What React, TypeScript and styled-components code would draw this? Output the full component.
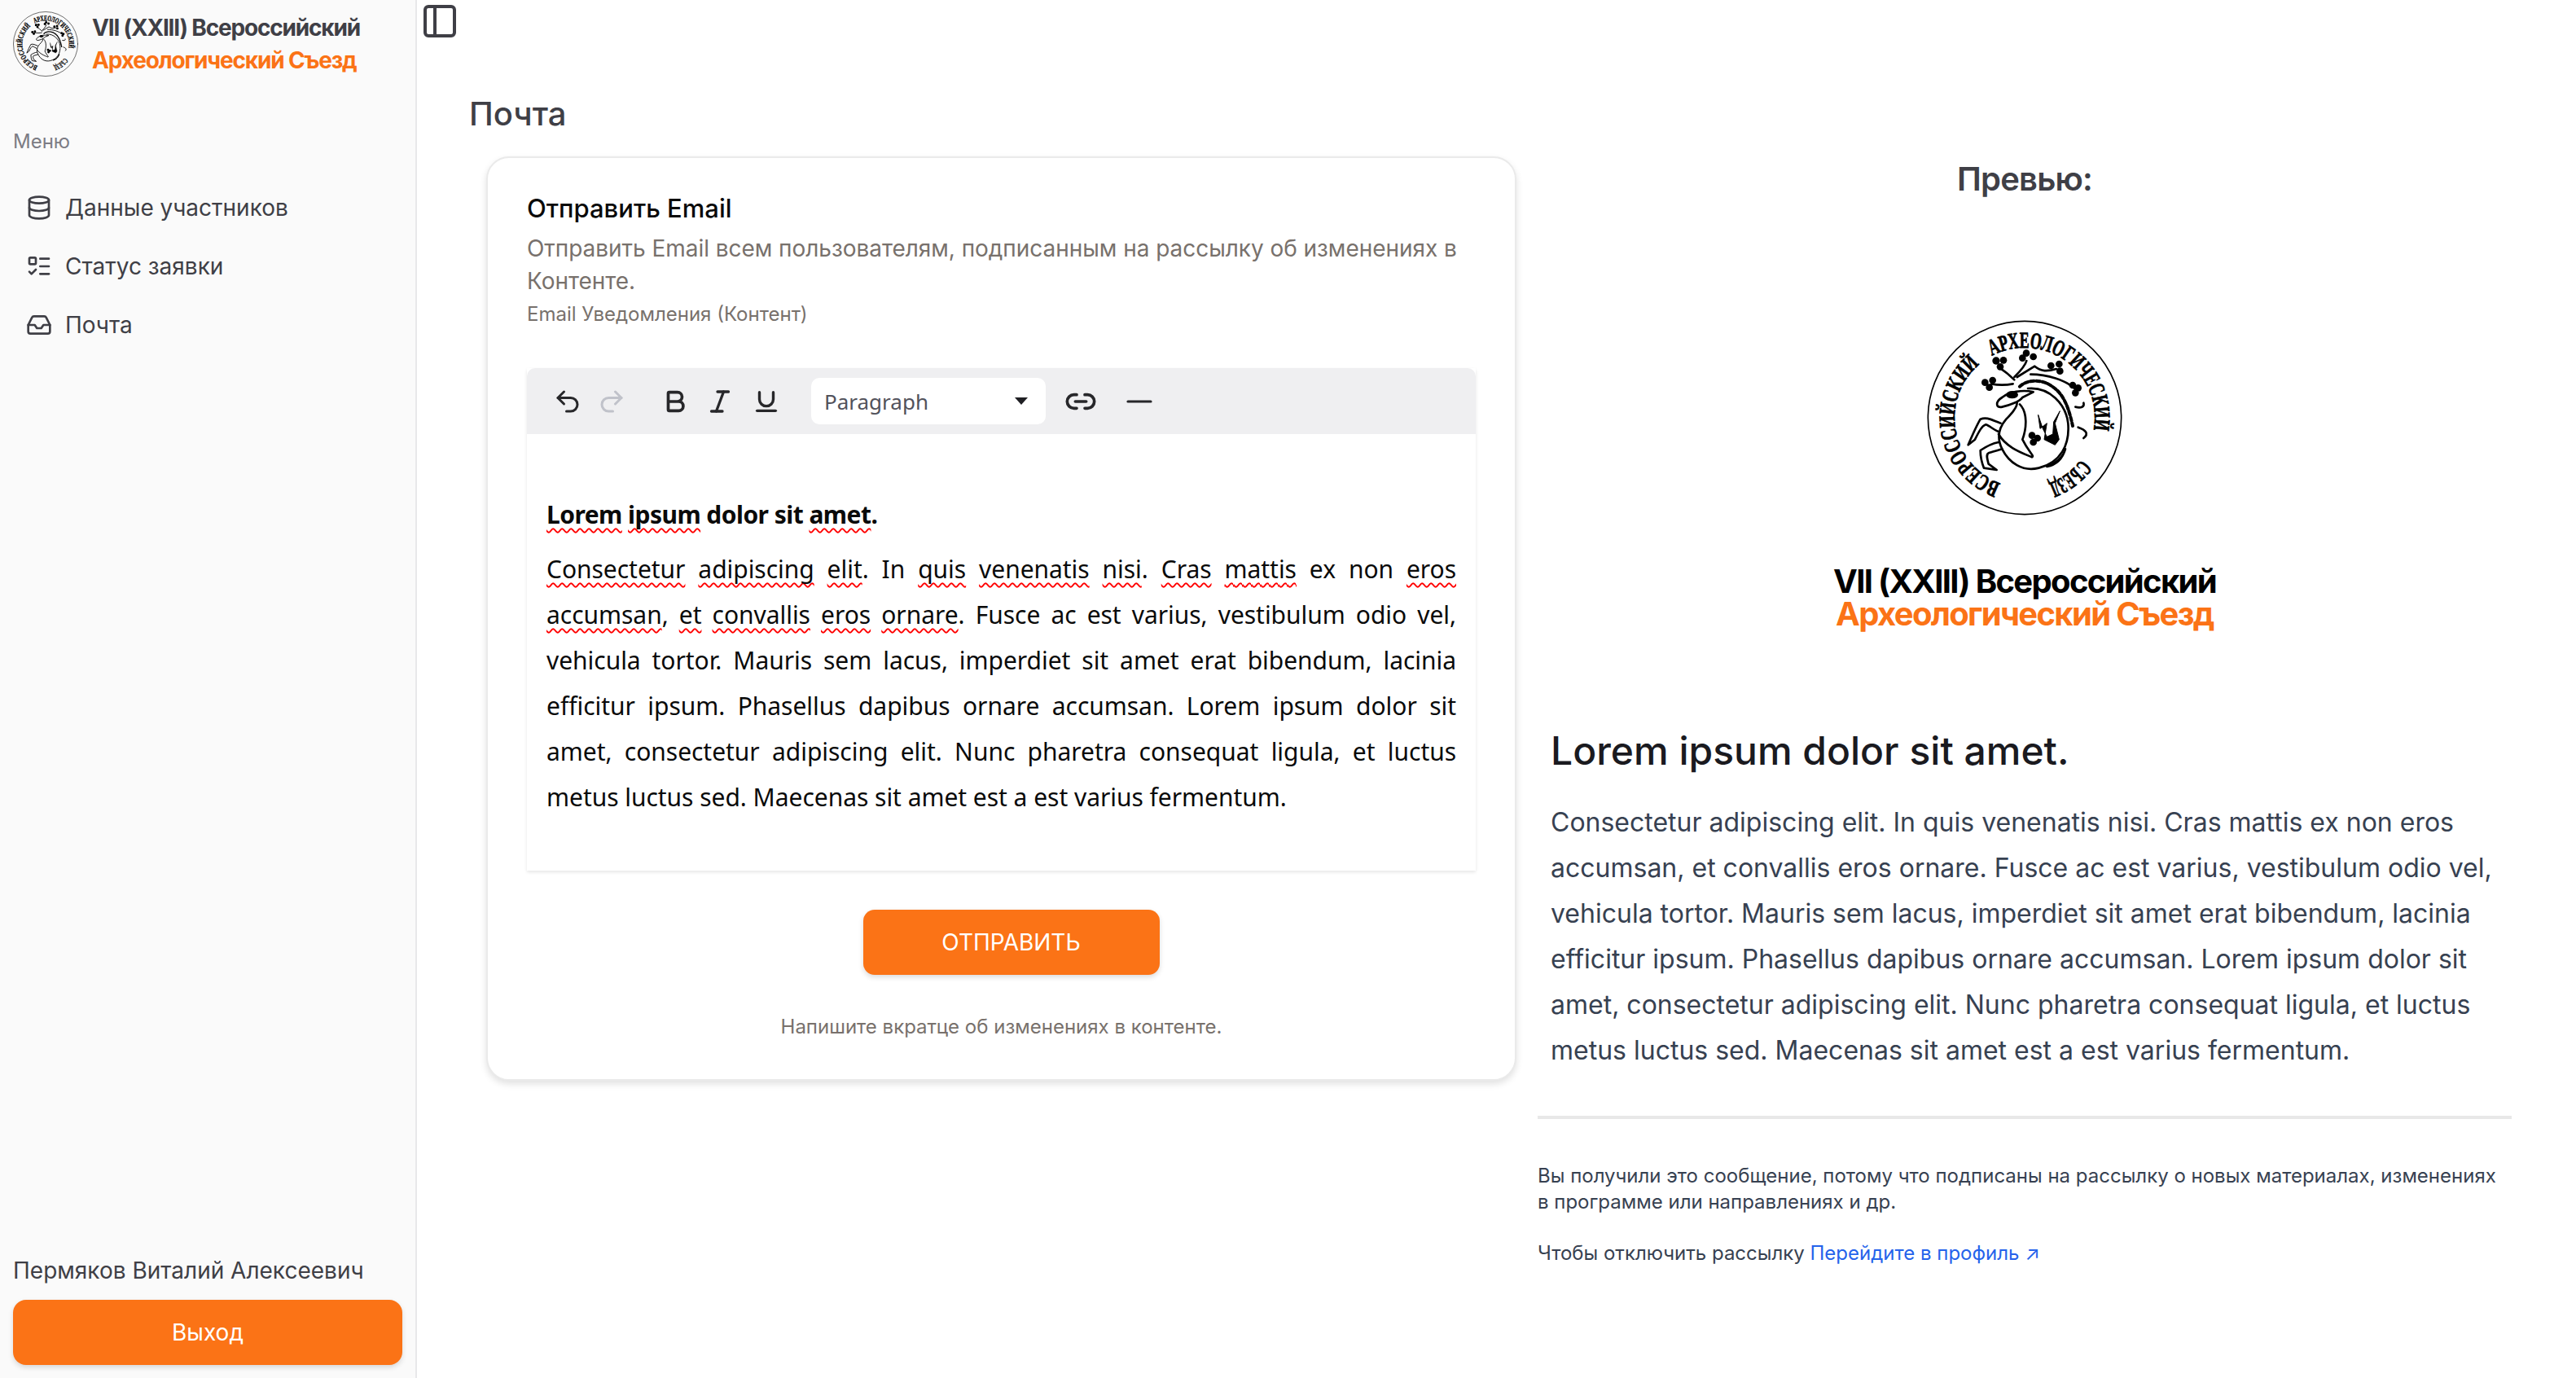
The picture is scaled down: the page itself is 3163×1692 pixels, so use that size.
import React from 'react';
import styled, { createGlobalStyle } from 'styled-components';
import { Database, Inbox, ListTodo, PanelLeft, Undo2, Redo2, Bold, Italic, Underline, Link2, Minus } from 'lucide-react';

const GlobalStyle = createGlobalStyle`
  html, body {
    margin: 0;
    padding: 0;
    background: #fff;
    font-family: Inter, "Noto Sans", sans-serif;
  }
  * { box-sizing: border-box; }
`;

const Layout = styled.div`
  display: grid;
  grid-template-columns: 512px 1fr;
  width: 3163px;
  height: 1692px;
  overflow: hidden;
`;

const Sidebar = styled.aside`
  display: flex;
  flex-direction: column;
  background: #fafafa;
  border-right: 2px solid #e8e8ea;
  padding: 14px 16px 16px;
`;

const Brand = styled.div`
  display: flex;
  align-items: center;
  gap: 17px;
  height: 80px;
`;

const BrandText = styled.div`
  font-size: 28px;
  font-weight: 700;
  letter-spacing: -0.042em;
  line-height: 40px;
  color: #3f3f46;
`;

const Accent = styled.div`
  color: #fb7316;
`;

const MenuLabel = styled.div`
  margin-top: 64px;
  font-size: 24px;
  line-height: 32px;
  color: #7c7c84;
`;

const Menu = styled.nav`
  display: flex;
  flex-direction: column;
  gap: 8px;
  margin-top: 33px;
`;

const MenuItem = styled.a`
  display: flex;
  align-items: center;
  gap: 16px;
  height: 64px;
  padding-left: 16px;
  font-size: 28px;
  color: #3f3f46;
`;

const SidebarFooter = styled.div`
  margin-top: auto;
`;

const UserName = styled.div`
  font-size: 28px;
  line-height: 40px;
  color: #3f3f46;
`;

const LogoutButton = styled.button`
  display: block;
  width: 478px;
  height: 80px;
  margin-top: 16px;
  border: 0;
  border-radius: 16px;
  background: #fb7316;
  box-shadow: 0 3px 6px rgba(0, 0, 0, 0.14);
  font: 28px Inter, sans-serif;
  color: #fff;
`;

const Main = styled.main`
  display: flex;
  flex-direction: column;
`;

const TopBar = styled.div`
  height: 110px;
  padding: 2px 0 0 4px;
  color: #3f3f46;
`;

const PageTitle = styled.h1`
  margin: 0;
  padding-left: 64px;
  font-size: 40px;
  font-weight: 500;
  line-height: 60px;
  color: #3f3f46;
`;

const Columns = styled.div`
  display: grid;
  grid-template-columns: 1265px 1196px;
  gap: 26px;
  margin: 22px 0 0 85px;
`;

const Card = styled.section`
  height: 1135px;
  padding: 44px 48px 0;
  border: 2px solid #eaeaea;
  border-radius: 28px;
  background: #fff;
  box-shadow: 0 4px 8px rgba(0, 0, 0, 0.12);
`;

const CardTitle = styled.h2`
  margin: 0;
  font-size: 31px;
  font-weight: 500;
  line-height: 36px;
  color: #0a0a0a;
`;

const CardDescription = styled.p`
  margin: 11px 0 0;
  font-size: 28px;
  line-height: 40px;
  letter-spacing: -0.0015em;
  color: #78716c;
`;

const FieldLabel = styled.div`
  margin-top: 5px;
  font-size: 24px;
  line-height: 32px;
  color: #78716c;
`;

const Editor = styled.div`
  margin-top: 50px;
  box-shadow: 0 2px 4px rgba(0, 0, 0, 0.1);
`;

const Toolbar = styled.div`
  display: flex;
  align-items: center;
  height: 81px;
  padding-left: 23px;
  border-radius: 10px 10px 0 0;
  background: #efeff1;
  color: #27272a;
`;

const ToolSlot = styled.span<{ $w: number; $muted?: boolean; $gap?: number }>`
  display: flex;
  justify-content: center;
  flex: none;
  width: ${(p) => p.$w}px;
  margin-left: ${(p) => p.$gap ?? 0}px;
  color: ${(p) => (p.$muted ? '#c0c2ca' : '#27272a')};
`;

const BlockSelect = styled.div`
  display: flex;
  align-items: center;
  justify-content: space-between;
  flex: none;
  width: 288px;
  height: 57px;
  margin: 0 19px 0 26px;
  padding: 0 22px 0 16px;
  border-radius: 10px;
  background: #fff;
  font: 26px "Noto Sans", sans-serif;
  color: #52525b;
`;

const Caret = styled.span`
  border-left: 8px solid transparent;
  border-right: 8px solid transparent;
  border-top: 9px solid #1f1f23;
`;

const EditorBody = styled.div`
  height: 536px;
  padding: 74px 24px 0;
  font-family: "Noto Sans", sans-serif;
  color: #0a0a0a;
`;

const EditorHeading = styled.p`
  margin: 0;
  font-size: 30px;
  font-weight: 700;
  line-height: 50px;
  letter-spacing: -0.018em;
`;

const EditorParagraph = styled.p`
  margin: 14px 0 0;
  font-size: 30px;
  line-height: 56px;
  letter-spacing: -0.04px;
  text-align: justify;
`;

const Misspelled = styled.span`
  text-decoration: underline wavy #f00 2px;
  text-decoration-skip-ink: none;
  text-underline-offset: 5px;
`;

const SubmitRow = styled.div`
  display: flex;
  justify-content: center;
  padding-left: 24px;
  margin-top: 48px;
`;

const SubmitButton = styled.button`
  width: 364px;
  height: 80px;
  border: 0;
  border-radius: 14px;
  background: #fb7316;
  box-shadow: 0 3px 6px rgba(0, 0, 0, 0.14);
  font: 28px Inter, sans-serif;
  text-transform: uppercase;
  color: #fff;
`;

const Hint = styled.div`
  margin-top: 48px;
  text-align: center;
  font-size: 24px;
  line-height: 32px;
  color: #78716c;
`;

const Preview = styled.section`
  display: flex;
  flex-direction: column;
`;

const PreviewTitle = styled.h2`
  margin: 0;
  text-align: center;
  font-size: 40px;
  font-weight: 600;
  line-height: 56px;
  letter-spacing: -0.02em;
  color: #3f3f46;
`;

const PreviewBrand = styled.div`
  display: flex;
  flex-direction: column;
  align-items: center;
  margin-top: 145px;
`;

const PreviewBrandText = styled.div`
  margin-top: 61px;
  text-align: center;
  font-size: 40px;
  font-weight: 700;
  letter-spacing: -0.042em;
  line-height: 40px;
  color: #000;
`;

const PreviewBody = styled.div`
  padding: 0 16px;
  margin-top: 116px;
`;

const PreviewHeading = styled.h3`
  margin: 0;
  font-size: 48px;
  font-weight: 500;
  line-height: 64px;
  color: #1a1a1f;
`;

const PreviewParagraph = styled.p`
  margin: 28px 0 0;
  font-size: 32px;
  line-height: 56px;
  color: #374151;
`;

const Divider = styled.hr`
  height: 4px;
  margin: 52px 0 0;
  border: 0;
  background: #e8e8e8;
`;

const Footnote = styled.p`
  margin: 54px 0 0;
  font-size: 24px;
  line-height: 32px;
  color: #374151;
`;

const FootLink = styled.a`
  color: #2563eb;
`;

const SecondFootnote = styled(Footnote)`
  margin-top: 31px;
`;

const SealText = styled.text`
  fill: #000;
  stroke: #000;
  stroke-width: 2.5px;
  font-family: "Liberation Serif", serif;
  font-weight: 700;
  font-size: 84px;
`;

const Seal: React.FC<{ id: string; size: number }> = ({ id, size }) => (
  <svg width={size} height={size} viewBox="348 100 720 720" fill="none" stroke="#000" strokeLinecap="round" strokeLinejoin="round">
    <circle cx="708" cy="460" r="356" strokeWidth="5" />
    <defs>
      <path id={id} d="M619.8 702.4 A258 258 0 1 1 796.2 702.4" />
    </defs>
    <SealText>
      <textPath href={`#${id}`} startOffset="0" textLength="540" lengthAdjust="spacingAndGlyphs">ВСЕРОССИЙСКИЙ</textPath>
    </SealText>
    <SealText>
      <textPath href={`#${id}`} startOffset="594" textLength="576" lengthAdjust="spacingAndGlyphs">АРХЕОЛОГИЧЕСКИЙ</textPath>
    </SealText>
    <SealText>
      <textPath href={`#${id}`} startOffset="1288" textLength="153" lengthAdjust="spacingAndGlyphs">СЪЕЗД</textPath>
    </SealText>
    <g strokeWidth="8">
      {/* body */}
      <path d="M720 352 C800 345 860 410 868 480 C875 560 840 625 760 645 C700 660 650 625 625 575 C605 535 610 500 640 465 C665 440 680 420 680 405" />
      <path d="M690 410 C720 440 715 500 700 540 C725 590 745 600 735 605 C700 590 640 570 612 520" />
      {/* head */}
      <path d="M740 365 C700 355 650 365 625 385 C600 400 600 425 625 420 C650 415 690 400 700 385 Z" />
      <ellipse cx="662" cy="375" rx="18" ry="10" fill="#000" />
      {/* front leg */}
      <path d="M620 480 C590 470 570 455 545 465 C530 490 515 525 500 560 L525 540 C540 510 550 490 565 485 C580 490 595 505 610 510" />
      {/* rear leg */}
      <path d="M612 550 C585 555 560 570 545 580 C545 605 550 625 558 645 L605 652 L575 630 C570 610 565 595 575 590 C590 585 610 580 625 575" />
      {/* tail */}
      <path d="M858 575 C850 605 825 625 790 640 C815 635 845 620 858 575 Z" fill="#000" />
      {/* antlers */}
      <path d="M670 320 C650 300 630 285 615 275" />
      <path d="M665 335 C640 340 610 340 585 335" />
      <path d="M670 310 C690 290 710 270 715 250" />
      <path d="M680 310 L745 270 C770 290 790 290 825 280" />
      <path d="M730 300 C790 300 860 320 895 355" />
      {/* crest */}
      <path d="M690 345 C720 315 780 320 810 345 C850 370 870 420 885 490" strokeWidth="12" strokeDasharray="14 8" />
      <path d="M895 420 C915 425 930 420 925 405" />
      <path d="M905 495 C935 505 945 520 925 535" />
      {/* knots */}
      <g fill="#000" strokeWidth="0">
        <circle cx="603" cy="250" r="14" /><circle cx="630" cy="248" r="13" /><circle cx="618" cy="272" r="13" />
        <circle cx="562" cy="330" r="13" /><circle cx="590" cy="322" r="13" /><circle cx="578" cy="348" r="13" />
        <circle cx="700" cy="240" r="13" /><circle cx="714" cy="222" r="13" /><circle cx="740" cy="235" r="13" />
        <circle cx="805" cy="268" r="13" /><circle cx="835" cy="262" r="13" /><circle cx="838" cy="288" r="13" />
        <circle cx="885" cy="340" r="13" /><circle cx="905" cy="350" r="13" /><circle cx="895" cy="368" r="13" />
        <circle cx="735" cy="525" r="13" /><circle cx="755" cy="535" r="13" /><circle cx="740" cy="550" r="13" />
      </g>
      {/* flames */}
      <path d="M758 450 L765 500 L790 480 L780 540 L820 560 L835 540 L820 480 L838 435 L815 475 L812 520 L790 530 L775 500 Z" fill="#000" strokeWidth="3" />
    </g>
  </svg>
);

export default function App() {
  return (
    <Layout>
      <GlobalStyle />
      <Sidebar>
        <Brand>
          <Seal id="seal-side" size={80} />
          <BrandText>
            VII (XXIII) Всероссийский
            <Accent>Археологический Съезд</Accent>
          </BrandText>
        </Brand>
        <MenuLabel>Меню</MenuLabel>
        <Menu>
          <MenuItem><Database size={32} strokeWidth={2} />Данные участников</MenuItem>
          <MenuItem><ListTodo size={32} strokeWidth={2} />Статус заявки</MenuItem>
          <MenuItem><Inbox size={32} strokeWidth={2} />Почта</MenuItem>
        </Menu>
        <SidebarFooter>
          <UserName>Пермяков Виталий Алексеевич</UserName>
          <LogoutButton>Выход</LogoutButton>
        </SidebarFooter>
      </Sidebar>
      <Main>
        <TopBar><PanelLeft size={48} strokeWidth={2} /></TopBar>
        <PageTitle>Почта</PageTitle>
        <Columns>
          <Card>
            <CardTitle>Отправить Email</CardTitle>
            <CardDescription>Отправить Email всем пользователям, подписанным на рассылку об изменениях в Контенте.</CardDescription>
            <FieldLabel>Email Уведомления (Контент)</FieldLabel>
            <Editor>
              <Toolbar>
                <ToolSlot $w={54}><Undo2 size={36} strokeWidth={2} /></ToolSlot>
                <ToolSlot $w={54} $muted><Redo2 size={36} strokeWidth={2} /></ToolSlot>
                <ToolSlot $w={54} $gap={24}><Bold size={34} strokeWidth={2.6} /></ToolSlot>
                <ToolSlot $w={56}><Italic size={36} strokeWidth={2.2} /></ToolSlot>
                <ToolSlot $w={58}><Underline size={34} strokeWidth={2.4} /></ToolSlot>
                <BlockSelect>Paragraph<Caret /></BlockSelect>
                <ToolSlot $w={48}><Link2 size={40} strokeWidth={2.2} /></ToolSlot>
                <ToolSlot $w={96}><Minus size={48} strokeWidth={1.6} /></ToolSlot>
              </Toolbar>
              <EditorBody>
                <EditorHeading>
                  <Misspelled>Lorem</Misspelled> <Misspelled>ipsum</Misspelled> dolor sit <Misspelled>amet</Misspelled>.
                </EditorHeading>
                <EditorParagraph>
                  <Misspelled>Consectetur</Misspelled> <Misspelled>adipiscing</Misspelled> <Misspelled>elit</Misspelled>. In <Misspelled>quis</Misspelled> <Misspelled>venenatis</Misspelled> <Misspelled>nisi</Misspelled>. <Misspelled>Cras</Misspelled> <Misspelled>mattis</Misspelled> ex non <Misspelled>eros</Misspelled> <Misspelled>accumsan</Misspelled>, <Misspelled>et</Misspelled> <Misspelled>convallis</Misspelled> <Misspelled>eros</Misspelled> <Misspelled>ornare</Misspelled>. Fusce ac est varius, vestibulum odio vel, vehicula tortor. Mauris sem lacus, imperdiet sit amet erat bibendum, lacinia efficitur ipsum. Phasellus dapibus ornare accumsan. Lorem ipsum dolor sit amet, consectetur adipiscing elit. Nunc pharetra consequat ligula, et luctus metus luctus sed. Maecenas sit amet est a est varius fermentum.
                </EditorParagraph>
              </EditorBody>
            </Editor>
            <SubmitRow><SubmitButton>Отправить</SubmitButton></SubmitRow>
            <Hint>Напишите вкратце об изменениях в контенте.</Hint>
          </Card>
          <Preview>
            <PreviewTitle>Превью:</PreviewTitle>
            <PreviewBrand>
              <Seal id="seal-preview" size={240} />
              <PreviewBrandText>
                VII (XXIII) Всероссийский
                <Accent>Археологический Съезд</Accent>
              </PreviewBrandText>
            </PreviewBrand>
            <PreviewBody>
              <PreviewHeading>Lorem ipsum dolor sit amet.</PreviewHeading>
              <PreviewParagraph>Consectetur adipiscing elit. In quis venenatis nisi. Cras mattis ex non eros accumsan, et convallis eros ornare. Fusce ac est varius, vestibulum odio vel, vehicula tortor. Mauris sem lacus, imperdiet sit amet erat bibendum, lacinia efficitur ipsum. Phasellus dapibus ornare accumsan. Lorem ipsum dolor sit amet, consectetur adipiscing elit. Nunc pharetra consequat ligula, et luctus metus luctus sed. Maecenas sit amet est a est varius fermentum.</PreviewParagraph>
            </PreviewBody>
            <Divider />
            <Footnote>Вы получили это сообщение, потому что подписаны на рассылку о новых материалах, изменениях в программе или направлениях и др.</Footnote>
            <SecondFootnote>Чтобы отключить рассылку <FootLink>Перейдите в профиль ↗</FootLink></SecondFootnote>
          </Preview>
        </Columns>
      </Main>
    </Layout>
  );
}
